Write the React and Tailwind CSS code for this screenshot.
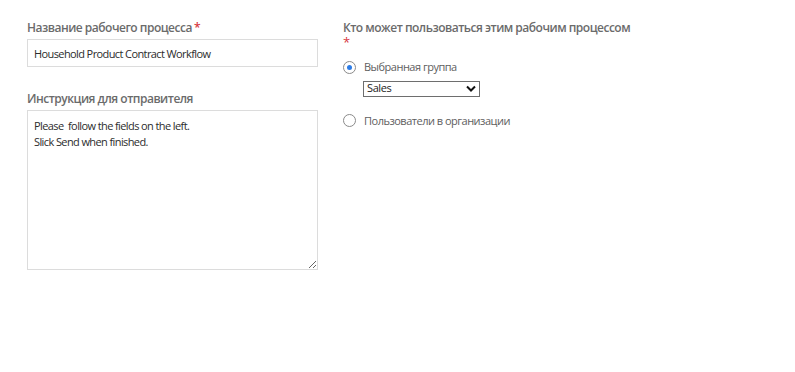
import React, { useState } from "react";

function App() {
  const [name, setName] = useState("Household Product Contract Workflow");
  const [message, setMessage] = useState(
    "Please  follow the fields on the left.\nSlick Send when finished."
  );
  const [audience, setAudience] = useState("group");

  return (
    <div
      className="w-[795px] h-[372px] bg-white flex gap-[25px] pl-[27px] pt-[20px]"
      style={{ fontFamily: '"Open Sans", "Liberation Sans", sans-serif' }}
    >
      {/* Left column */}
      <div className="w-[291px] flex flex-col">
        <label className="text-[12px] font-semibold text-[#6b6b6b] leading-[16px] tracking-[-0.5px]">
          Название рабочего процесса<span className="ml-[2px] text-[#d7373f]">*</span>
        </label>
        <input
          value={name}
          onChange={(e) => setName(e.target.value)}
          className="mt-[3px] h-[28px] w-full border border-[#dcdcdc] px-[6px] text-[11px] text-[#2c2c2c] tracking-[-0.6px] outline-none"
        />

        <label className="mt-[24px] text-[12px] font-semibold text-[#6b6b6b] leading-[16px] tracking-[-0.5px]">
          Инструкция для отправителя
        </label>
        <textarea
          value={message}
          onChange={(e) => setMessage(e.target.value)}
          className="mt-[3px] h-[160px] w-full border border-[#dcdcdc] px-[6px] pt-[7px] text-[11px] leading-[16px] text-[#2c2c2c] tracking-[-0.6px] outline-none resize"
        />
      </div>

      {/* Right column */}
      <div className="w-[292px] flex flex-col">
        <div className="text-[12px] font-semibold text-[#6b6b6b] leading-[15px] tracking-[-0.5px]">
          Кто может пользоваться этим рабочим процессом <span className="text-[13px] font-normal text-[#d7373f]">*</span>
        </div>

        <label
          className="mt-[9px] flex items-center gap-[8px] cursor-pointer"
          onClick={() => setAudience("group")}
        >
          <span className="w-[13px] h-[13px] rounded-full border border-[#8a8a8a] flex items-center justify-center bg-white">
            {audience === "group" && (
              <span className="w-[5px] h-[5px] rounded-full bg-[#2d7ce6]" />
            )}
          </span>
          <span className="text-[11px] text-[#5e5e5e] tracking-[-0.5px]">Выбранная группа</span>
        </label>

        <div className="mt-[5px] ml-[20px] w-[117px] h-[16px] border border-[#6e6e6e] flex items-center justify-between px-[3px] text-[11px] text-[#1c1c1c] tracking-[-0.4px]">
          <span>Sales</span>
          <svg width="10" height="7" viewBox="0 0 10 7">
            <path d="M1 1.5 L5 5.5 L9 1.5" fill="none" stroke="#111" strokeWidth="2" />
          </svg>
        </div>

        <label
          className="mt-[16px] flex items-center gap-[8px] cursor-pointer"
          onClick={() => setAudience("org")}
        >
          <span className="w-[13px] h-[13px] rounded-full border border-[#8a8a8a] flex items-center justify-center bg-white">
            {audience === "org" && (
              <span className="w-[5px] h-[5px] rounded-full bg-[#2d7ce6]" />
            )}
          </span>
          <span className="text-[11px] text-[#5e5e5e] tracking-[-0.5px]">Пользователи в организации</span>
        </label>
      </div>
    </div>
  );
}

export default App;
